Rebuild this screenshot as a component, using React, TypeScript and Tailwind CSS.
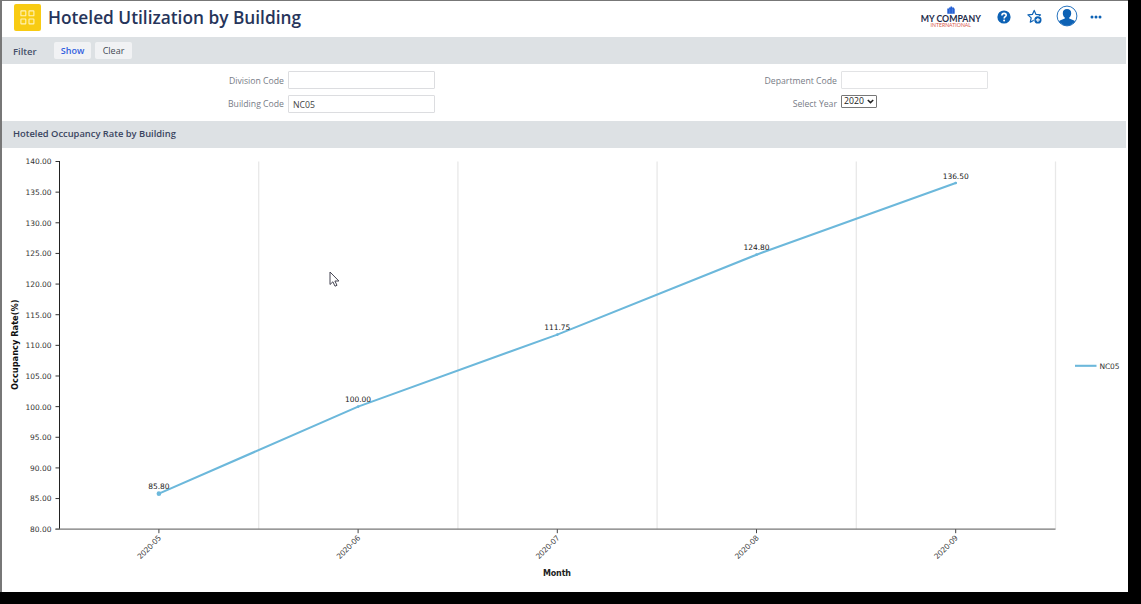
import React from "react";

const SERIES = [
  { month: "2020-05", value: 85.8 },
  { month: "2020-06", value: 100 },
  { month: "2020-07", value: 111.75 },
  { month: "2020-08", value: 124.8 },
  { month: "2020-09", value: 136.5 },
];

const TICKS = Array.from({ length: 13 }, (_, i) => 140 - i * 5);

// Plot area inside the 1126x444 chart panel
const LEFT = 57.5;
const TOP = 13.5;
const BOTTOM = 381.2;
const BAND = 199.2;

const xAt = (i: number) => LEFT - 0.2 + BAND * (i + 0.5);
const yAt = (v: number) => BOTTOM - ((v - 80) / 60) * (BOTTOM - TOP);

function Chart() {
  return (
    <svg width="1126" height="444" viewBox="0 0 1126 444" className="block font-['DejaVu_Sans',sans-serif]">
      {[1, 2, 3, 4, 5].map((i) => (
        <line key={i} x1={LEFT + BAND * i} x2={LEFT + BAND * i} y1={TOP} y2={BOTTOM} stroke="#e8e8e8" strokeWidth="1.3" />
      ))}
      {TICKS.map((t) => (
        <g key={t}>
          <line x1="53.5" x2="57.5" y1={yAt(t)} y2={yAt(t)} stroke="#333" strokeWidth="1" />
          <text x="49.5" y={yAt(t) + 2.9} textAnchor="end" fontSize="7.5" fill="#333" textLength={t >= 100 ? 26 : 21.5}>
            {t.toFixed(2)}
          </text>
        </g>
      ))}
      <line x1={LEFT} x2={LEFT} y1={TOP - 0.5} y2={BOTTOM} stroke="#222" strokeWidth="1" />
      <line x1={LEFT - 4} x2={LEFT + BAND * 5} y1={BOTTOM} y2={BOTTOM} stroke="#777" strokeWidth="1.3" />
      <polyline
        points={SERIES.map((p, i) => `${xAt(i)},${yAt(p.value)}`).join(" ")}
        fill="none"
        stroke="#6cb8db"
        strokeWidth="2.1"
        strokeLinecap="round"
        strokeLinejoin="round"
      />
      <circle cx={xAt(0)} cy={yAt(85.8)} r="2.3" fill="#6cb8db" />
      {SERIES.slice(1).map((p, i) => (
        <circle key={p.month} cx={xAt(i + 1)} cy={yAt(p.value)} r="1.3" fill="#6cb8db" />
      ))}
      {SERIES.map((p, i) => (
        <g key={p.month}>
          <line x1={xAt(i)} x2={xAt(i)} y1={BOTTOM} y2={BOTTOM + 4} stroke="#444" strokeWidth="1" />
          <text x={xAt(i)} y={yAt(p.value) - 4.3} textAnchor="middle" fontSize="7.5" fill="#222" textLength={p.value >= 100 ? 26 : 21.5}>
            {p.value.toFixed(2)}
          </text>
          <text
            transform={`translate(${xAt(i) + 2.8} ${BOTTOM + 9.2}) rotate(-45)`}
            textAnchor="end"
            fontSize="7.5"
            fill="#444"
            textLength="30"
          >
            {p.month}
          </text>
        </g>
      ))}
      <text transform="translate(16 242) rotate(-90)" fontSize="8" fontWeight="700" fill="#111" textLength="90.5" lengthAdjust="spacingAndGlyphs">
        Occupancy Rate(%)
      </text>
      <text x="541" y="427.6" fontSize="8" fontWeight="700" fill="#222" textLength="28">
        Month
      </text>
      <line x1="1073" x2="1094.5" y1="217.8" y2="217.8" stroke="#6cb8db" strokeWidth="2.1" />
      <text x="1097.5" y="221" fontSize="7.5" fill="#333" textLength="20">
        NC05
      </text>
    </svg>
  );
}

function Header() {
  return (
    <header className="flex h-9 shrink-0 items-center justify-between pr-[26px] pl-3">
      <div className="flex items-center">
        <div className="mt-[-4px] flex h-[27px] w-[27px] items-center justify-center rounded-[2px] bg-[#f8cb12]">
          <svg width="15" height="15" viewBox="0 0 15 15" fill="none" stroke="#fff3b8" strokeWidth="1.1">
            <rect x="0.9" y="0.9" width="4.9" height="4.9" rx="0.4" />
            <rect x="9" y="0.9" width="4.9" height="4.9" rx="0.4" />
            <rect x="0.9" y="9" width="4.9" height="4.9" rx="0.4" />
            <rect x="9" y="9" width="4.9" height="4.9" rx="0.4" />
          </svg>
        </div>
        <h1 className="mt-[-3px] ml-[7px] text-[17.3px] leading-6 font-semibold whitespace-nowrap text-[#26345a]">
          Hoteled Utilization by Building
        </h1>
      </div>
      <div className="mt-[-6px] flex items-center">
        <svg width="62" height="24" viewBox="0 0 62 24" className="mt-[4px] font-['Lato',sans-serif]">
          <path d="M27.3 2.5h1.6v-1h1.6v-.9h1.6v.9H34v1h.7v5.3h-7.4z" fill="#2460d3" />
          <path d="M29.7 2.5v5.3M32.4 2.5v5.3" stroke="#6f97ea" strokeWidth="0.5" />
          <text x="0.8" y="15.8" fontSize="8.7" fontWeight="700" fill="#1d2b4a" textLength="60" lengthAdjust="spacingAndGlyphs">
            MY COMPANY
          </text>
          <text x="10.5" y="21.2" fontSize="5.5" fill="#d9574b" textLength="40.5" lengthAdjust="spacingAndGlyphs">
            INTERNATIONAL
          </text>
        </svg>
        <svg width="14" height="14" viewBox="0 0 14 14" className="mt-[2px] ml-[15.5px]">
          <circle cx="7" cy="7" r="6.6" fill="#0d62b5" />
          <path d="M4.9 5.6c0-1.4 1-2.2 2.2-2.2 1.3 0 2.1.8 2.1 1.8 0 1.5-2 1.5-2 3.2" fill="none" stroke="#fff" strokeWidth="1.6" />
          <circle cx="7.1" cy="10.5" r="1" fill="#fff" />
        </svg>
        <svg width="16" height="16" viewBox="0 0 16 16" className="mt-[2px] ml-[16px]">
          <path d="M7.2 1.4l1.8 4 4.5.5-3.3 3 .9 4.3-3.9-2.2-3.9 2.2.9-4.3-3.3-3L5.4 5.4z" fill="none" stroke="#0d62b5" strokeWidth="1.2" strokeLinejoin="round" />
          <circle cx="10.9" cy="10.9" r="4.2" fill="#fff" />
          <circle cx="10.9" cy="10.9" r="3.6" fill="#0d62b5" />
          <path d="M10.9 8.9v4M8.9 10.9h4" stroke="#fff" strokeWidth="1.1" />
        </svg>
        <svg width="22" height="22" viewBox="0 0 22 22" className="ml-[13px]">
          <defs>
            <clipPath id="avatar">
              <circle cx="11" cy="11" r="9.7" />
            </clipPath>
          </defs>
          <circle cx="11" cy="11" r="9.9" fill="#fff" stroke="#0d62b5" strokeWidth="0.9" />
          <g clipPath="url(#avatar)" fill="#0d62b5">
            <path d="M11 4c2.7 0 4.4 1.8 4.2 4.4-.1 1.9-.9 3.4-2 4.2v1l4.3 1.6c1.5.6 2.5 2 2.7 5.8H1.8c.2-3.8 1.2-5.2 2.7-5.8l4.3-1.6v-1c-1.1-.8-1.9-2.3-2-4.2C6.6 5.8 8.3 4 11 4z" />
          </g>
        </svg>
        <svg width="12" height="4" viewBox="0 0 12 4" fill="#0d62b5" className="mt-[2px] ml-[12px]">
          <circle cx="2" cy="2" r="1.5" />
          <circle cx="6" cy="2" r="1.5" />
          <circle cx="10" cy="2" r="1.5" />
        </svg>
      </div>
    </header>
  );
}

export default function App() {
  return (
    <div className="h-[604px] w-[1141px] overflow-hidden bg-black font-['Open_Sans',sans-serif]">
      <div className="flex h-[592px] w-[1128px] flex-col border-t border-l-2 border-[#777] bg-white">
        <Header />
        <div className="mr-0.5 flex h-[27px] shrink-0 items-center bg-[#dde1e4] pl-[11px]">
          <span className="mt-[3px] w-[41px] text-[9.5px] font-semibold text-[#46516a]">Filter</span>
          <button className="h-[17px] w-[37px] rounded-[2px] bg-[#f1f2f4] text-[9px] leading-[17px] font-semibold text-[#315fdf]">Show</button>
          <button className="ml-1 h-[17px] w-[37px] rounded-[2px] bg-[#f1f2f4] text-[9px] leading-[17px] font-medium text-[#444a55]">Clear</button>
        </div>
        <div className="grid h-[57px] shrink-0 grid-cols-[553px_1fr] pt-[7px] text-[8.7px] text-[#777c86]">
          <div className="grid auto-rows-min grid-cols-[282px_147px] gap-x-1 gap-y-[5px]">
            <label className="h-[19px] text-right leading-[20px]">Division Code</label>
            <div className="h-[18px] rounded-[1px] border border-[#dcdde0]" />
            <label className="text-right leading-[19px]">Building Code</label>
            <div className="h-[18px] rounded-[1px] border border-[#dcdde0] pl-1 leading-[18px] text-[#444]">NC05</div>
          </div>
          <div className="grid auto-rows-min grid-cols-[282px_147px] gap-x-1 gap-y-[5px]">
            <label className="h-[19px] text-right leading-[20px]">Department Code</label>
            <div className="h-[18px] rounded-[1px] border border-[#e2e3e5]" />
            <label className="text-right leading-[19px]">Select Year</label>
            <div className="flex h-[13px] w-9 items-center justify-between rounded-[1px] border border-[#777] pr-[2px] pl-[2px] text-[8.7px] leading-none text-[#222]">
              <span>2020</span>
              <svg width="7" height="5" viewBox="0 0 7 5" fill="none" stroke="#222" strokeWidth="1.5">
                <path d="M0.8 1l2.7 2.6L6.2 1" />
              </svg>
            </div>
          </div>
        </div>
        <div className="mr-0.5 flex h-[27px] shrink-0 items-center bg-[#dde1e4] pl-[11px]">
          <h2 className="text-[9.35px] font-semibold text-[#3a4560]">Hoteled Occupancy Rate by Building</h2>
        </div>
        <Chart />
      </div>
      <svg width="11" height="17" viewBox="0 0 11 17" className="absolute top-[271px] left-[329px]">
        <path d="M1 1v12.5l2.9-2.7 2.1 4.4 2-.9-2.1-4.3h4z" fill="#fff" stroke="#454552" strokeWidth="1" />
      </svg>
    </div>
  );
}
